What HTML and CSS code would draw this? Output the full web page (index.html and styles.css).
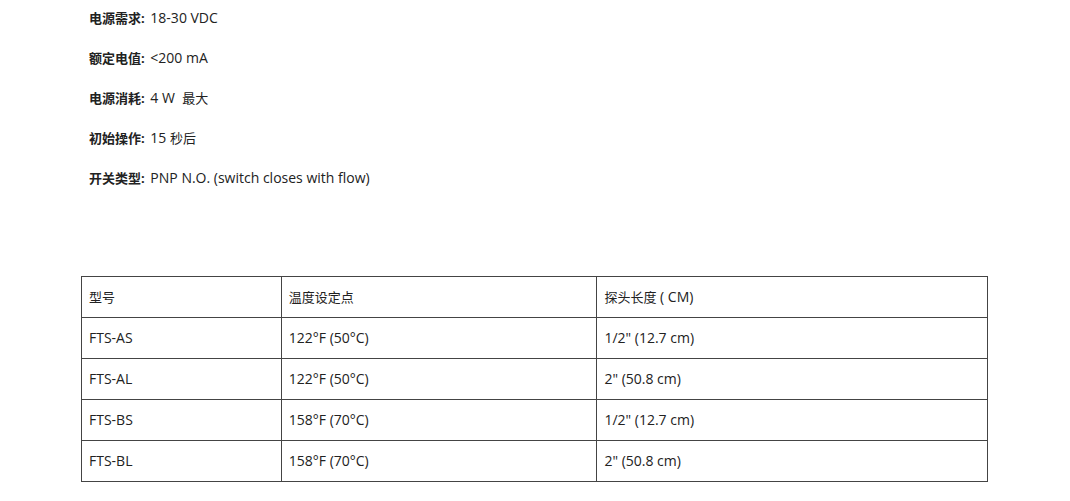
FILE: index.html
```html
<!DOCTYPE html>
<html lang="zh">
<head>
<meta charset="utf-8">
<link rel="stylesheet" href="styles.css">
</head>
<body>
<div class="page">
  <div class="specs">
    <p class="spec"><b class="cjk label">电源需求:</b> 18-30 VDC</p>
    <p class="spec"><b class="cjk label">额定电值:</b> &lt;200 mA</p>
    <p class="spec"><b class="cjk label">电源消耗:</b> 4 W &nbsp;<span class="cjk">最大</span></p>
    <p class="spec"><b class="cjk label">初始操作:</b> 15 <span class="cjk">秒后</span></p>
    <p class="spec"><b class="cjk label">开关类型:</b> PNP N.O. (switch closes with flow)</p>
  </div>
  <table class="models">
    <colgroup>
      <col class="c1"><col class="c2"><col class="c3">
    </colgroup>
    <tr><td class="cjk">型号</td><td class="cjk">温度设定点</td><td><span class="cjk">探头长度</span> ( CM)</td></tr>
    <tr><td>FTS-AS</td><td>122°F (50°C)</td><td>1/2" (12.7 cm)</td></tr>
    <tr><td>FTS-AL</td><td>122°F (50°C)</td><td>2" (50.8 cm)</td></tr>
    <tr><td>FTS-BS</td><td>158°F (70°C)</td><td>1/2" (12.7 cm)</td></tr>
    <tr><td>FTS-BL</td><td>158°F (70°C)</td><td>2" (50.8 cm)</td></tr>
  </table>
</div>
</body>
</html>
```
FILE: styles.css
```css
html, body {
  margin: 0;
  padding: 0;
  background: #fff;
}
body {
  font-family: "Open Sans", "Noto Sans CJK SC", sans-serif;
  font-size: 14px;
  color: #222;
}
.cjk {
  font-size: 13px;
}
.page {
  padding: 0 0 0 81px;
}
.specs {
  display: flex;
  flex-direction: column;
  gap: 22px;
  padding: 9px 0 0 8px;
}
.spec {
  margin: 0;
  line-height: 18px;
}
.label {
  font-weight: bold;
  margin-right: 2px;
}
.models {
  margin-top: 89px;
  width: 907px;
  border-collapse: collapse;
}
.c1 { width: 200px; }
.c2 { width: 316px; }
.c3 { width: 391px; }
.models td {
  border: 1px solid #444;
  height: 40px;
  padding: 0 7px;
  vertical-align: middle;
  line-height: 18px;
}
```
